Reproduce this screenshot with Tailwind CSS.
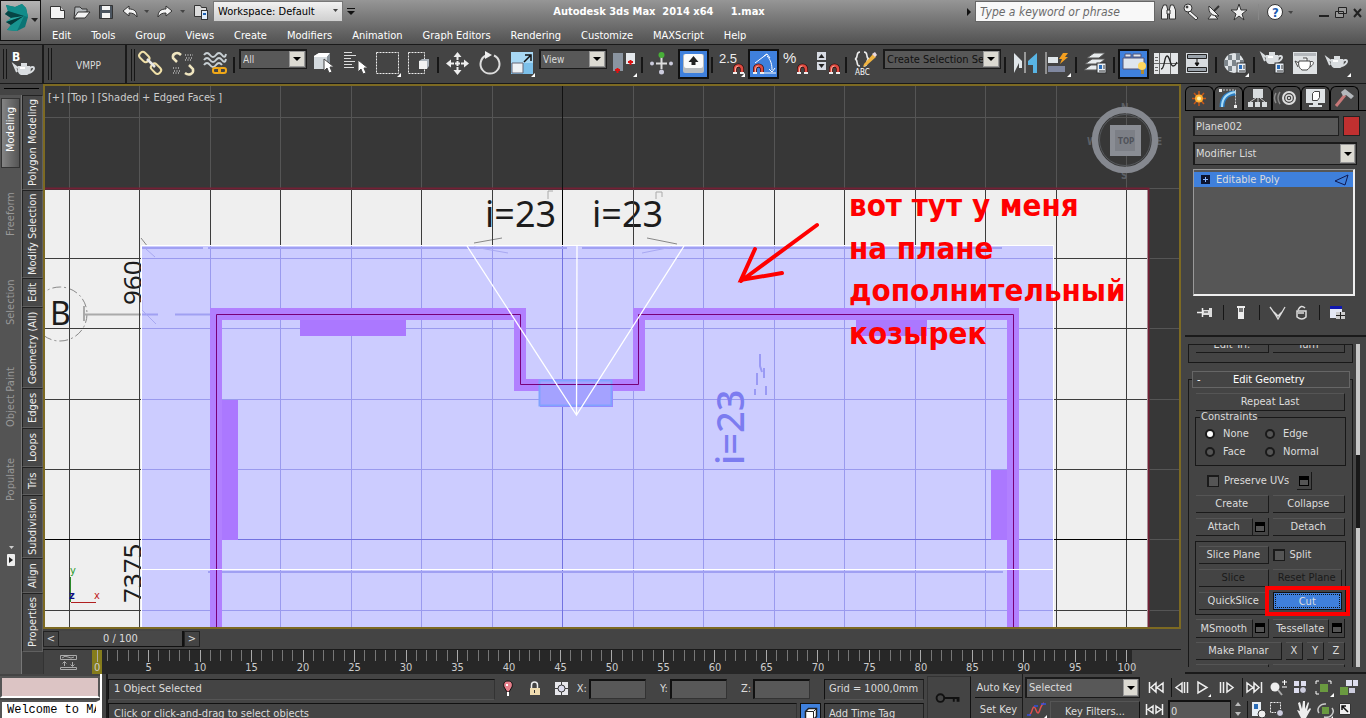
<!DOCTYPE html>
<html lang="en">
<head>
    <meta charset="UTF-8">
    <meta name="viewport" content="width=device-width, initial-scale=1.0">
    <title>Autodesk 3ds Max 2014 x64 - 1.max</title>
    <script src="https://cdn.jsdelivr.net/npm/@tailwindcss/browser@4"></script>
</head>
<body class="flex h-screen flex-col overflow-hidden bg-[#444] font-['DejaVu_Sans_Condensed','DejaVu_Sans',sans-serif] text-[11px] leading-[14px] text-[#dcdcdc]">

    <!-- Shared icon parts -->
    <svg class="absolute h-0 w-0" aria-hidden="true">
        <defs>
            <g id="magnet">
                <path d="M2 11V6a3.500 3.500 0 0 1 7 0v5" fill="none" stroke="#301010" stroke-width="4" />
                <path d="M2 11V6a3.500 3.500 0 0 1 7 0v5" fill="none" stroke="#e04a40" stroke-width="2.600" />
                <path d="M2.500 9V6a3 3 0 0 1 3-3" fill="none" stroke="#f8b0a0" />
                <path d="M0 9h4v2H0zM7 9h4v2H7z" fill="#eee" />
            </g>
            <path id="corner" d="M29 25v4h-4z" fill="#fff" />
            <g id="teapot">
                <path d="M5 6h12c2 4 0 8-3 9H8C5 14 4 10 5 6z" fill="#d9dde0" />
                <path d="M9 4h4v2H9zM5 8L1 5l3 7M17 8c5-3 6 2-1 5" fill="none" stroke="#d9dde0" stroke-width="2" />
                <path d="M7 8h5" stroke="#fff" stroke-width="2" />
            </g>
            <g id="cardlet">
                <rect x="0" y="0" width="9" height="10" fill="#e8eef4" stroke="#333" />
                <path d="M2 2h3v4H2z" fill="#2a6cb8" />
                <path d="M6 3h2M6 5h2M2 8h6" stroke="#333" />
            </g>
            <path id="cursor" d="M0 0v12l3-3 2 5 3-1-2-5h4z" fill="#fff" stroke="#444" stroke-width="1" />
        </defs>
    </svg>

    <!-- Title bar and menus -->
    <header class="flex h-11 shrink-0 bg-linear-to-b from-[#969696] to-[#525252]">
        <button aria-label="Application menu" class="relative h-[41px] w-[41px] shrink-0 border border-[#111] bg-linear-to-b from-[#b4b4b4] to-[#707070]">
            <svg class="h-full w-full" viewBox="0 0 39 39">
                <path d="M5 4l9 2 7-3 4 4 2 9-3 10-8 4-10-1 4-5-5-3 5-4-6-4 3-3z" fill="#0b7474" />
                <path d="M5 4l9 2 9 9-16-5zM21 3l4 4 2 9-4-1-9-9z" fill="#128c8a" />
                <path d="M7 10l16 5-13 2-6-4z" fill="#064545" />
                <path d="M10 17l13-2-18 6z" fill="#2aa8a2" />
                <path d="M5 21l18-6-13 9z" fill="#053c3c" />
                <path d="M10 24l13-9-7 15-10-1z" fill="#18938f" />
                <path d="M30 17h7l-3 4z" fill="#222" />
            </svg>
        </button>
        <div class="min-w-0 flex-1">
            <div class="flex h-[23px] items-center">
                <svg class="ml-2 h-[22px] w-40 shrink-0" viewBox="0 0 160 22">
                    <g stroke="#333" fill="#f4f4f4">
                        <path d="M1.500 5.500h10l4 4v8h-14z" />
                        <path d="M11.500 5.500v4h4" fill="#ccc" />
                        <path d="M26 6h5l2 2h5v3l-8 1-3 6h-2z" fill="#b9bdc0" />
                        <path d="M29 11h12l-5 6H25z" />
                        <path d="M50.500 4.500h13v13h-13z" fill="#4b5560" />
                        <path d="M53 5h8v4h-8zM53 12h8v5h-8z" stroke="none" />
                        <path d="M74 10l6-5v3c5 0 8 2 8 8-2-3-4-4-8-4v3z" />
                        <path d="M123 10l-6-5v3c-5 0-8 2-8 8 2-3 4-4 8-4v3z" />
                        <path d="M145.500 4.500h6l1 2h5v9h-12z" fill="#dcdcdc" />
                        <rect x="152.500" y="9.500" width="6" height="9" fill="#e0ecf8" />
                    </g>
                    <path d="M95 9h5l-2 3zM131 9h5l-2 3z" fill="#444" />
                    <path d="M154 12h3v2h-3z" fill="#1d62b4" />
                </svg>
                <div class="relative ml-1 shrink-0">
                    <select aria-label="Workspace" class="h-[21px] w-[130px] appearance-none border border-[#777] bg-linear-to-b from-[#f2f2f2] to-[#cfcfcf] pl-1 text-black">
                        <option>Workspace: Default</option>
                    </select>
                    <svg class="pointer-events-none absolute top-2 right-1 h-1 w-1.5" viewBox="0 0 6 4"><path d="M0 0h5L2.500 3z" fill="#444" /></svg>
                </div>
                <svg class="ml-1 h-2 w-2 shrink-0" viewBox="0 0 8 8"><path d="M0 0h8v1H0zM0 3h8L4 7z" fill="#111" /></svg>
                <h1 class="flex-1 pr-1 text-center font-bold whitespace-pre text-white">Autodesk 3ds Max  2014 x64     1.max</h1>
                <svg class="mr-1 h-2 w-1 shrink-0" viewBox="0 0 4 8"><path d="M0 0v8l4-4z" fill="#111" /></svg>
                <input type="text" aria-label="Search" placeholder="Type a keyword or phrase" class="h-[21px] w-[180px] shrink-0 border border-[#666] bg-[#f8f8f8] px-1 text-[12px] italic placeholder:text-[#6a6a6a]">
                <svg class="ml-1 h-[22px] w-[207px] shrink-0" viewBox="0 0 207 22">
                    <g fill="#f0f0f0" stroke="#333">
                        <path d="M2.500 18V9l2-5h3l1 4v10zM10.500 18V8l1-4h3l2 5v9z" />
                        <path d="M8 9h3v4H8z" />
                        <circle cx="29" cy="7" r="4" /><path d="M31 10l8 7-2 2-8-7z" />
                        <circle cx="28" cy="6" r="1" fill="#333" />
                        <path d="M50 5c-1 7 3 10 10 10zM52 14l-3 4h10l-3-3" />
                        <path d="M55 10l5-5" stroke-width="2" />
                        <path d="M80 3l2 6h6l-5 4 2 6-5-4-5 4 2-6-5-4h6z" />
                        <circle cx="116" cy="11" r="7.500" fill="#fff" />
                    </g>
                    <text x="113" y="16" class="fill-[#1f5db0] text-[13px] font-bold">?</text>
                    <path d="M99.500 3v16" stroke="#888" />
                    <path d="M129 10h5l-2 3z" fill="#444" />
                    <path d="M160 14h10v2h-10z" fill="#222" />
                    <path d="M179.500 6.500h8v6h-8zM176.500 10.500h8v6h-8z" fill="#999" stroke="#222" />
                    <path d="M195 8l7 8M202 8l-7 8" stroke="#222" stroke-width="2" />
                </svg>
            </div>
            <nav class="flex h-[21px] items-center gap-5 pt-1 pl-[11px] text-white">
                <a href="#">Edit</a>
                <a href="#">Tools</a>
                <a href="#">Group</a>
                <a href="#">Views</a>
                <a href="#">Create</a>
                <a href="#">Modifiers</a>
                <a href="#">Animation</a>
                <a href="#">Graph Editors</a>
                <a href="#">Rendering</a>
                <a href="#">Customize</a>
                <a href="#">MAXScript</a>
                <a href="#">Help</a>
            </nav>
        </div>
    </header>

    <!-- Main toolbar -->
    <div class="flex h-10 shrink-0 items-start overflow-hidden border-t border-b border-[#1a1a1a]">
        <div class="flex h-full w-11 shrink-0 border-r-2 border-[#1a1a1a] py-1 pl-[3px]">
            <span class="w-1 border-x border-[#161616]"></span>
            <svg class="h-8 w-8" viewBox="0 0 32 32">
                <text x="5" y="12" class="fill-white text-[12px] font-bold">B</text>
                <use href="#teapot" x="6" y="11" />
            </svg>
        </div>
        <div class="flex h-full w-[83px] shrink-0 items-center border-r-2 border-[#1a1a1a] pl-1">
            <span class="h-8 w-1 border-x border-[#161616]"></span>
            <button class="flex-1 pt-1 text-[10px]">VMPP</button>
        </div>
        <span class="mt-1 ml-1 h-8 w-1 shrink-0 border-x border-[#161616]"></span>
        <div class="flex items-start pt-1">
            <button aria-label="Select and link" class="w-8"><svg class="h-[30px] w-8" viewBox="-1 0 32 30">
                <g fill="none" stroke="#f0e0a8" stroke-width="2"><rect x="3" y="5" width="11" height="7" rx="3" transform="rotate(45 9 8)" /><rect x="15" y="16" width="11" height="7" rx="3" transform="rotate(45 20 19)" /><path d="M11 10l8 8" stroke="#e8e8e8" stroke-width="2.500" /></g>
            </svg></button>
            <button aria-label="Unlink selection" class="w-8"><svg class="h-[30px] w-8" viewBox="-1 0 32 30">
                <g fill="none" stroke="#f0e6c0" stroke-width="2.500"><path d="M13 6C9 2 4 5 5 9l4 4M17 24c4 3 9 1 8-4l-4-4" /></g>
                <g stroke="#999" stroke-width="2" stroke-dasharray="1 1.500"><path d="M17 6h8M18 9h7M17 11h7M5 19h7M6 22h7M5 24h6" /></g>
            </svg></button>
            <button aria-label="Bind to space warp" class="w-8"><svg class="h-[30px] w-8" viewBox="-1 0 32 30">
                <g fill="none" stroke="#c8d0d4" stroke-width="2"><path d="M4 6q3-4 6 0t6 0 6 0 4-1M4 11q3-4 6 0t6 0 6 0 4-1M4 16q3-4 6 0t6 0 6 0" /></g>
                <g fill="none" stroke="#f0a818" stroke-width="2"><rect x="13" y="19" width="7" height="5" rx="2" /><rect x="19" y="19" width="7" height="5" rx="2" /></g>
            </svg></button>
            <span class="mx-[2px] mt-2 h-4 w-[2px] bg-[#161616]"></span>
            <div class="relative ml-0.5">
                <select aria-label="Selection filter" class="h-5 w-[68px] appearance-none border-2 border-r border-b border-[#1a1a1a] bg-[#585858] pl-0.5 text-[10px]"><option>All</option></select>
                <span class="pointer-events-none absolute top-0.5 right-0.5 flex h-4 w-4 items-center justify-center border border-[#999] bg-[#dcdad2]"><svg class="h-1 w-2" viewBox="0 0 8 4"><path d="M0 0h8L4 4z" /></svg></span>
            </div>
            <button aria-label="Select object" class="w-8"><svg class="h-[30px] w-8" viewBox="-1 0 32 30">
                <path d="M6 7l5-3h11l-3 4v12H6z" fill="#d4dade" /><path d="M6 7l5-3h11l-3 4H6z" fill="#fff" /><path d="M19 8l3-4v11l-3 4z" fill="#8a949c" /><use href="#cursor" x="16" y="10" />
            </svg></button>
            <button aria-label="Select by name" class="w-8"><svg class="h-[30px] w-8" viewBox="-1 0 32 30">
                <path d="M4 3.500h8M4 6.500h12M4 9.500h7M4 12.500h11M4 15.500h8M4 18.500h10" stroke="#ddd" /><use href="#cursor" x="18" y="11" />
            </svg></button>
            <button aria-label="Rectangular selection region" class="w-8"><svg class="h-[30px] w-8" viewBox="-1 0 32 30">
                <rect x="4.500" y="3.500" width="22" height="21" fill="none" stroke="#eee" stroke-dasharray="2 1" /><use href="#corner" y="-1" />
            </svg></button>
            <button aria-label="Window crossing" class="w-8"><svg class="h-[30px] w-8" viewBox="-1 0 32 30">
                <rect x="4.500" y="3.500" width="16" height="21" fill="none" stroke="#eee" stroke-dasharray="2 1" /><path d="M15 12l3-2h7v7l-2 3h-8z" fill="#aab2ba" /><path d="M15 12h8v8h-8z" fill="#f2f2f2" />
            </svg></button>
            <span class="mx-[2px] mt-2 h-4 w-[2px] bg-[#161616]"></span>
            <button aria-label="Select and move" class="w-8"><svg class="h-[30px] w-8" viewBox="-1 0 32 30">
                <path d="M15.500 6v5M15.500 18v5M7 14.500h5M19 14.500h5M13 14.500h5M15.500 12v5" stroke="#eee" stroke-width="2" /><path d="M15.500 3l4 5h-8zM15.500 26l4-5h-8zM4 14.500l5-4v8zM27 14.500l-5-4v8z" fill="#eee" />
            </svg></button>
            <button aria-label="Select and rotate" class="w-8"><svg class="h-[30px] w-8" viewBox="-1 0 32 30">
                <path d="M12 6.500a9.500 9.500 0 1 0 8 0" fill="none" stroke="#ddd" stroke-width="2" /><path d="M11 2l7 4-7 4z" fill="#eee" />
            </svg></button>
            <button aria-label="Select and scale" class="w-8"><svg class="h-[30px] w-8" viewBox="-1 0 32 30">
                <path d="M5 3h22v22H5z" fill="#7cc0ea" /><path d="M5 3h22v11H5z" fill="#a8d8f4" /><path d="M6 14h11v10H6z" fill="#eef2f6" stroke="#667" /><path d="M18 13l6-6M19 6h6v6" fill="none" stroke="#111" stroke-width="1.500" /><use href="#corner" y="-1" />
            </svg></button>
            <div class="relative ml-0.5">
                <select aria-label="Reference coordinate system" class="h-5 w-[68px] appearance-none border-2 border-r border-b border-[#1a1a1a] bg-[#585858] pl-0.5 text-[10px]"><option>View</option></select>
                <span class="pointer-events-none absolute top-0.5 right-0.5 flex h-4 w-4 items-center justify-center border border-[#999] bg-[#dcdad2]"><svg class="h-1 w-2" viewBox="0 0 8 4"><path d="M0 0h8L4 4z" /></svg></span>
            </div>
            <button aria-label="Pivot point center" class="w-8"><svg class="h-[30px] w-8" viewBox="-1 0 32 30">
                <path d="M5 4h10v18H5z" fill="#8a94a0" /><path d="M18 4h9v11h-9z" fill="#e4e8ec" /><path d="M7 21h5M9.500 19v5M20 13h5M22.500 11v5" stroke="#e01010" stroke-width="2" /><use href="#corner" y="-1" />
            </svg></button>
            <span class="mx-[2px] mt-2 h-4 w-[2px] bg-[#161616]"></span>
            <button aria-label="Select and manipulate" class="w-8"><svg class="h-[30px] w-8" viewBox="-1 0 32 30">
                <path d="M15.500 8v12M10 14.500h11" stroke="#ddd" stroke-width="2" /><circle cx="15.500" cy="6" r="3" fill="#48b038" /><circle cx="6" cy="14.500" r="2" fill="#ccd" /><circle cx="25" cy="14.500" r="2" fill="#ccd" /><circle cx="15.500" cy="23" r="2.500" fill="#ccd" />
            </svg></button>
            <button aria-label="Keyboard shortcut override" class="w-8"><svg class="h-[30px] w-8" viewBox="-1 0 32 30">
                <rect x="1" y="1" width="29" height="28" fill="#3f80dc" stroke="#111" stroke-width="2" /><rect x="5" y="5" width="21" height="19" rx="2" fill="#b8bcc0" /><rect x="6" y="5" width="19" height="14" rx="2" fill="#fafafa" /><path d="M15.500 7l5 6h-3v3h-4v-3h-3z" fill="#222" />
            </svg></button>
            <span class="mx-[2px] mt-2 h-4 w-[2px] bg-[#161616]"></span>
            <button aria-label="Snaps toggle" class="w-8"><svg class="h-[30px] w-8" viewBox="-1 0 32 30">
                <text x="3" y="14" class="fill-[#eee] font-['Liberation_Sans'] text-[13px]">2.5</text><use href="#magnet" x="17" y="14" /><use href="#corner" y="-1" />
            </svg></button>
            <button aria-label="Angle snap toggle" class="w-8"><svg class="h-[30px] w-8" viewBox="-1 0 32 30">
                <rect x="1" y="1" width="29" height="28" fill="#3f80dc" stroke="#111" stroke-width="2" /><path d="M7 14L19 5M16 24h12M19 7c4 4 5 9 5 14M16 7l3-2 3 4M21 20l3 3 3-4" fill="none" stroke="#fff" /><use href="#magnet" x="5" y="14" />
            </svg></button>
            <button aria-label="Percent snap toggle" class="w-8"><svg class="h-[30px] w-8" viewBox="-1 0 32 30">
                <text x="3" y="14" class="fill-[#eee] font-['Liberation_Sans'] text-[15px]">%</text><use href="#magnet" x="17" y="14" />
            </svg></button>
            <button aria-label="Spinner snap toggle" class="w-8"><svg class="h-[30px] w-8" viewBox="-1 0 32 30">
                <path d="M5 3h9v8H5zM5 13h9v8H5z" fill="#d8dce4" /><path d="M6.500 9h6L9.500 5zM6.500 15h6l-3 4z" fill="#222" /><use href="#magnet" x="17" y="14" />
            </svg></button>
            <span class="mx-[2px] mt-2 h-4 w-[2px] bg-[#161616]"></span>
            <button aria-label="Edit named selection sets" class="w-8"><svg class="h-[30px] w-8" viewBox="-1 0 32 30">
                <path d="M10 3c-5 0-1 6-5 7 4 1 0 7 5 7M14 3c5 0 1 6 5 7-4 1 0 7-5 7" fill="none" stroke="#eee" stroke-width="1.500" /><path d="M14 15l9-10 3 3-9 8-4 2z" fill="#f0b440" /><path d="M22 5l3-2 2 3-2 2z" fill="#e8d8e0" /><text x="5" y="26" class="fill-white text-[8px]">ABC</text>
            </svg></button>
            <div class="relative ml-0.5">
                <select aria-label="Named selection sets" class="h-5 w-[118px] appearance-none border-2 border-r border-b border-[#1a1a1a] bg-[#585858] pr-4 pl-0.5 text-[#111]"><option>Create Selection Set</option></select>
                <span class="pointer-events-none absolute top-0.5 right-0.5 flex h-4 w-4 items-center justify-center border border-[#999] bg-[#dcdad2]"><svg class="h-1 w-2" viewBox="0 0 8 4"><path d="M0 0h8L4 4z" /></svg></span>
            </div>
            <span class="mx-[3px] mt-2 h-4 w-[2px] bg-[#161616]"></span>
            <button aria-label="Mirror" class="w-8"><svg class="h-[30px] w-8" viewBox="-1 0 32 30">
                <path d="M4 4l8 8v7H9v-5l-5 10z" fill="#e0e6ea" /><path d="M27 4l-9 8v4h5v8h4z" fill="#58b4e4" /><path d="M15 3v21" stroke="#eee" />
            </svg></button>
            <button aria-label="Align" class="w-8"><svg class="h-[30px] w-8" viewBox="-1 0 32 30">
                <path d="M4 3v22" stroke="#ddd" /><path d="M6 8h10v6H6z" fill="#e0e6ea" /><path d="M6 17h17v6H6z" fill="#8088a0" /><path d="M21 4h5l-3 4h3l-8 7 2-5h-3z" fill="#f4a020" /><use href="#corner" y="-1" />
            </svg></button>
            <span class="mx-[2px] mt-2 h-4 w-[2px] bg-[#161616]"></span>
            <button aria-label="Layer manager" class="w-8"><svg class="h-[30px] w-8" viewBox="-1 0 32 30">
                <g fill="#e8ecee" stroke="#555"><path d="M4 21l7-5h13l-6 5z" /><path d="M5 15l7-5h13l-6 5z" /><path d="M7 9l7-5h11l-6 5z" /></g><use href="#cardlet" x="17" y="14" />
            </svg></button>
            <span class="mx-[2px] mt-2 h-4 w-[2px] bg-[#161616]"></span>
            <button aria-label="Toggle ribbon" class="w-8"><svg class="h-[30px] w-8" viewBox="-1 0 32 30">
                <rect x="1" y="1" width="29" height="28" fill="#3f80dc" stroke="#111" stroke-width="2" /><path d="M5 9h21v11H5zM7 5h6v3H7zM15 5h8v3h-8z" fill="#dfe6ee" stroke="#557" /><circle cx="24" cy="17" r="4" fill="#ffd860" /><path d="M23 21h3v4h-3z" fill="#b08830" />
            </svg></button>
            <button aria-label="Curve editor" class="w-8"><svg class="h-[30px] w-8" viewBox="-1 0 32 30">
                <path d="M4 4h24v21H4z" fill="#e4e6e8" /><path d="M9.500 4v21M4 14.500h24M5 8.500h3M5 11.500h3M5 18.500h3M5 21.500h3M20.500 4v21" stroke="#666" /><path d="M11 20c4 0 3-13 6-13s3 10 6 10 2-1 4-4" fill="none" stroke="#222" stroke-width="1.300" />
            </svg></button>
            <button aria-label="Schematic view" class="w-8"><svg class="h-[30px] w-8" viewBox="-1 0 32 30">
                <path d="M4 4h22v20H4z" fill="#d8dce0" /><path d="M5.500 5.500h19v4h-19zM5.500 18.500h19v4h-19z" fill="#9aa2aa" stroke="#222" /><path d="M15 10v6M13 14h4l-2 3z" fill="#111" stroke="#111" />
            </svg></button>
            <span class="mx-[2px] mt-2 h-4 w-[2px] bg-[#161616]"></span>
            <button aria-label="Material editor" class="w-8"><svg class="h-[30px] w-8" viewBox="-1 0 32 30">
                <circle cx="14" cy="14" r="10" fill="#dfe3e6" /><path d="M8 6h4v5H8zM16 4h4v7h-4zM4 11h4v6H4zM12 11h4v6h-4zM20 11h4v6h-4zM8 17h4v5H8z" fill="#7d858b" /><use href="#cardlet" x="17" y="14" /><use href="#corner" y="-1" />
            </svg></button>
            <span class="mx-[2px] mt-2 h-4 w-[2px] bg-[#161616]"></span>
            <button aria-label="Render setup" class="w-8"><svg class="h-[30px] w-8" viewBox="-1 0 32 30">
                <use href="#teapot" x="3" y="0" /><use href="#cardlet" x="17" y="14" />
            </svg></button>
            <button aria-label="Rendered frame window" class="w-8"><svg class="h-[30px] w-8" viewBox="-1 0 32 30">
                <path d="M3 3h24v22H3z" fill="#dfe2e4" /><path d="M4 4h22v3H4z" fill="#b4b8bc" /><path d="M9 12h11c1 4 0 7-3 9h-5c-3-2-4-5-3-9zM13 9h4v3M9 14l-4-2 3 6M20 13c4-2 5 2 0 5" fill="#fff" stroke="#444" />
            </svg></button>
            <button aria-label="Render production" class="w-8"><svg class="h-[30px] w-8" viewBox="-1 0 32 30">
                <use href="#teapot" x="4" y="4" /><use href="#corner" y="-1" />
            </svg></button>
        </div>
    </div>

    <!-- Workspace -->
    <div class="flex min-h-0 flex-1">

        <!-- Modeling ribbon -->
        <aside class="flex w-[43px] shrink-0 flex-col">
            <div class="h-[11px] shrink-0 px-1 pt-1"><div class="border-b border-black"></div></div>
            <div class="flex min-h-0 flex-1">
                <div class="flex w-[22px] flex-col items-center border-r border-[#777] bg-[#545454] text-[#999]">
                    <button class="mt-[3px] h-[70px] w-[19px] rotate-180 border border-[#333] bg-linear-to-r from-[#555] to-[#858585] pb-2 text-right text-white [writing-mode:vertical-rl]">Modeling</button>
                    <button class="mt-[22px] h-[48px] w-[19px] rotate-180 [writing-mode:vertical-rl]">Freeform</button>
                    <button class="mt-10 h-[48px] w-[19px] rotate-180 whitespace-nowrap [writing-mode:vertical-rl]">Selection</button>
                    <button class="mt-9 h-[70px] w-[19px] rotate-180 whitespace-nowrap [writing-mode:vertical-rl]">Object Paint</button>
                    <button class="mt-6 h-[48px] w-[19px] rotate-180 whitespace-nowrap [writing-mode:vertical-rl]">Populate</button>
                    <svg class="mt-10 h-6 w-3" viewBox="0 0 12 24"><path d="M4 2h5L6.500 5z" fill="#ccc" /><rect x="2" y="10" width="8" height="12" rx="1" fill="#eee" /><path d="M4 13l4 3-4 3z" fill="#222" /></svg>
                </div>
                <div class="flex w-[21px] flex-col bg-[#3e3e3e] text-[#eee] *:shrink-0 *:rotate-180 *:border *:border-[#222] *:border-t-[#606060] *:border-l-[#606060] *:bg-[#484848] *:whitespace-nowrap *:[writing-mode:vertical-rl]">
                    <button class="h-[95px]">Polygon Modeling</button>
                    <button class="h-[88px]">Modify Selection</button>
                    <button class="h-[29px]">Edit</button>
                    <button class="h-[81px]">Geometry (All)</button>
                    <button class="h-[40px]">Edges</button>
                    <button class="h-[39px]">Loops</button>
                    <button class="h-[28px]">Tris</button>
                    <button class="h-[63px]">Subdivision</button>
                    <button class="h-[35px]">Align</button>
                    <button class="h-[59px]">Properties</button>
                </div>
            </div>
        </aside>

        <!-- Viewport with time slider -->
        <main class="flex min-w-0 flex-1 flex-col">
            <div class="relative min-h-0 flex-1 border-2 border-[#7d6a22] bg-[#373737]">
                <svg class="h-full w-full" id="viewport">
                    <g transform="translate(-45,-86)">
                        <g shape-rendering="crispEdges" stroke="#555" id="grid-dark"></g>
                        <path d="M45 188.500h1103.500V700" fill="none" stroke="#732035" stroke-width="2" />
                        <path d="M45 190h1102.500v500H45z" fill="#efefef" />
                        <g fill="none" stroke="#888">
                            <circle cx="60" cy="314" r="27" stroke-dasharray="9 3 2 3" />
                            <path d="M84 306v15M84 314.500h58" stroke-width="2" stroke="#aaa" />
                            <path d="M141 238l14 18M474 243l28-5M647 238l30 6" />
                        </g>
                        <g class="font-['Noto_Sans'] text-[26px]" fill="#1c1c1c">
                            <text transform="translate(142,305) rotate(-90)">960</text>
                            <text transform="translate(142,603) rotate(-90)">7375</text>
                            <text x="50" y="325" class="text-[32px]">B</text>
                            <text x="485" y="227" class="text-[36px]">i=23</text>
                            <text x="592" y="227" class="text-[36px]">i=23</text>
                        </g>
                        <path d="M548 199v-8h5M656 199v-7h6v5" fill="none" stroke="#aaa" />
                        <svg x="45" y="190" width="1102" height="510" viewBox="45 190 1102 510">
                            <g shape-rendering="crispEdges" stroke="#3c3c3c" id="grid-light"></g>
                        </svg>
                        <path d="M562.500 86v104" stroke="#111" />

                        <!-- Roof plane -->
                        <path d="M142 246h911v460H142z" fill="#ccccff" />
                        <svg x="142" y="246" width="911" height="460" viewBox="142 246 911 460">
                            <g shape-rendering="crispEdges" stroke="#9a9aee" id="grid-roof"></g>
                            <path d="M562.500 246v400M142 539.500h911" stroke="#7272e0" />
                        </svg>
                        <path d="M142 248h61M208 248h359M582 248h420M208 572h795" stroke="#a0a0f2" stroke-width="2" />
                        <path d="M142 314.500h16M175 314.500h35" stroke="#a0a0f2" stroke-width="2" />
                        <path d="M474 247l34 6M642 253l30-6M146 249l9 8M142 300v10l14 14" fill="none" stroke="#a8a8f2" />
                        <text transform="translate(744,465) rotate(-90)" class="font-['Noto_Sans'] text-[38px] font-medium" fill="#7c7cf0">i=23</text>
                        <path d="M760 354v12l2 6M757 373v12M764 368v10M755 389v6M766 386v9" fill="none" stroke="#9a9af4" stroke-width="2" />

                        <!-- Walls -->
                        <g fill="#ab78ff">
                            <path d="M300 318h106v18H300zM856 318h71v18h-71zM222 400h16v140h-16zM991 470h17v70h-17zM540 385h73v22h-73z" />
                        </g>
                        <path d="M216 700V314h304v71h119v-71h374v386" fill="none" stroke="#b180ff" stroke-width="12" />
                        <path d="M539.500 380.500h72v25h-72z" fill="#a4a2ff" stroke="#80a2ff" stroke-width="2" />
                        <path d="M216.500 700V314.500h304v70h118v-70h375V700" fill="none" stroke="#780078" />

                        <!-- Selected edges -->
                        <path d="M141.500 700V245.500h912V700M142 569.500h911" fill="none" stroke="#fff" />
                        <path d="M467 246l109.500 169L684 246M577 246l-.5 169" fill="none" stroke="#fff" stroke-width="1.300" />

                        <!-- Axis tripod -->
                        <path d="M70.500 577v25" stroke="#2a8a2a" />
                        <path d="M71 602.500h25" stroke="#b02020" />
                        <text x="70" y="574" fill="#2a9a2a">y</text>
                        <text x="94" y="599" fill="#c02020">x</text>
                        <text x="69" y="599" fill="#101080" class="font-bold">z</text>

                        <!-- Note -->
                        <g fill="none" stroke="#ff0000" stroke-width="4" stroke-linecap="round">
                            <path d="M817 225l-76 56M755 249l-14 31 41-7" />
                        </g>
                        <g class="text-[31px] font-bold" fill="#ff0000">
                            <text x="849" y="216">вот тут у меня</text>
                            <text x="849" y="259">на плане</text>
                            <text x="849" y="301">дополнительный</text>
                            <text x="849" y="344">козырек</text>
                        </g>

                        <!-- View cube -->
                        <g class="text-[10px] font-bold" fill="#5c6066">
                            <text x="1121" y="111">N</text>
                            <text x="1121" y="179">S</text>
                            <text x="1087" y="145">W</text>
                            <text x="1156" y="145">E</text>
                            <circle cx="1125" cy="140" r="30" fill="none" stroke="#85888f" stroke-width="6.500" />
                            <circle cx="1125" cy="140" r="25.500" fill="none" stroke="#55585c" />
                            <path d="M1110 125h31v31h-31z" fill="#8a8d94" />
                            <path d="M1115 130h20v21h-20z" fill="#7c7f86" />
                            <text x="1118" y="144" class="text-[8px]" fill="#50535a">TOP</text>
                        </g>
                    </g>
                </svg>
                <p class="absolute top-[5px] left-[3px] whitespace-pre text-[#ccc]">[+] [Top ] [Shaded + Edged Faces ]</p>
            </div>

            <div class="flex h-[21px] shrink-0 items-center border-b border-[#1a1a1a]">
                <button class="h-4 w-4 border border-[#222] leading-3">&lt;</button>
                <button class="h-4 w-[125px] border-r-2 border-b border-[#111] bg-[#484848]">0 / 100</button>
                <button class="h-4 w-4 border border-[#222] leading-3">&gt;</button>
            </div>
            <div class="flex h-6 shrink-0">
                <button aria-label="Open mini curve editor" class="flex w-[49px] justify-center border-l border-[#333] pt-1">
                    <svg class="h-[17px] w-[17px]" viewBox="0 0 17 17"><path d="M.5 1.500h16v4H.5zM.5 13.500h16v2H.5zM2 4q3-3 6-1t6 0M4.500 12V8M2.500 9.500l2-2 2 2M12.500 8v4M10.500 10.500l2 2 2-2" fill="none" stroke="#aaa" /></svg>
                </button>
                <div id="trackbar" class="flex min-w-0 flex-1 bg-[#272727]"></div>
                <div class="w-[49px]"></div>
            </div>
        </main>

        <!-- Command panel -->
        <aside class="flex w-[185px] shrink-0 flex-col overflow-hidden pl-1">
            <div class="mt-0.5 flex h-[25px] shrink-0 border-b border-black *:h-6 *:w-[29px] *:rounded-t-md *:border *:border-b-0 *:border-black">
                <button aria-label="Create"><svg class="h-full w-full" viewBox="0 0 27 23"><path d="M13 4v15M6 11.500h14M8 6l10 11M18 6L8 17" stroke="#c85818" stroke-width="1.500" /><circle cx="13" cy="11.500" r="4" fill="#ffb030" /><circle cx="13" cy="11.500" r="2" fill="#fff4b0" /></svg></button>
                <button aria-label="Modify" class="bg-[#4c4c4c]"><svg class="h-full w-full" viewBox="0 0 27 23"><path d="M7 20C7 11 12 6 21 6" fill="none" stroke="#2c7cc0" stroke-width="5" /><path d="M7 20C7 10 12 6 21 5" fill="none" stroke="#a8dcf8" stroke-width="2" /><path d="M5 3h15.500v16" fill="none" stroke="#ccc" stroke-dasharray="2 1" /><path d="M4 2h3v3H4zM19 18h3v3h-3z" fill="#eee" /></svg></button>
                <button aria-label="Hierarchy"><svg class="h-full w-full" viewBox="0 0 27 23"><path d="M9 2h10v9H9zM4 15h5v5H4zM11 15h5v5h-5zM18 15h5v5h-5z" fill="#d8dcde" /><path d="M14 11v4M6 15l6-4M21 15l-5-4" stroke="#ccc" /></svg></button>
                <button aria-label="Motion"><svg class="h-full w-full" viewBox="0 0 27 23"><g fill="none" stroke="#ddd" stroke-width="2"><circle cx="16" cy="11" r="6" /><circle cx="16" cy="11" r="3" stroke-width="1.500" /><path d="M7 5q-4 6 0 12M3 6q-3 5 0 10" stroke="#888" stroke-width="1.500" /></g><circle cx="16" cy="11" r="1" fill="#fff" /></svg></button>
                <button aria-label="Display"><svg class="h-full w-full" viewBox="0 0 27 23"><path d="M4 2h19v14H4zM11 16h5v2h4v2H7v-2h4z" fill="#dfe3e6" /><path d="M10.500 6.500l2-2h5v6l-2 3h-5z" fill="#fff" stroke="#444" /></svg></button>
                <button aria-label="Utilities"><svg class="h-full w-full" viewBox="0 0 27 23"><path d="M5 19L14 8" stroke="#c87878" stroke-width="3" /><path d="M10 5l4-3 9 7-3 3-5-4-3 1z" fill="#b4b8bc" /></svg></button>
            </div>

            <div class="flex flex-col pt-[5px] pr-1.5 pl-2">
                <div class="flex gap-1">
                    <input type="text" aria-label="Object name" value="Plane002" class="h-5 min-w-0 flex-1 border-2 border-r border-b border-[#1f1f1f] bg-[#585858] pl-px">
                    <button aria-label="Object color" class="h-5 w-[17px] border border-[#222] bg-[#c03030]"></button>
                </div>
                <div class="relative mt-1.5 mr-[3px]">
                    <select aria-label="Modifier list" class="h-[23px] w-full appearance-none border-2 border-r border-b border-[#1a1a1a] bg-[#585858] pl-px"><option>Modifier List</option></select>
                    <span class="pointer-events-none absolute top-0.5 right-0.5 flex h-[19px] w-[15px] items-center justify-center border border-[#999] bg-[#dcdad2]"><svg class="h-1 w-2" viewBox="0 0 8 4"><path d="M0 0h8L4 4z" fill="#000" /></svg></span>
                </div>
                <div class="mt-1 mr-[5px] h-[127px] border-2 border-t border-l border-[#eee] border-t-[#999] border-l-[#999] bg-[#565656]">
                    <button class="mt-0.5 flex h-[15px] w-full items-center bg-[#3f80dc] pl-[7px] text-left">
                        <svg class="mr-1.5 h-[9px] w-[9px]" viewBox="0 0 9 9"><path d="M0 0h9v9H0z" fill="#0c1430" /><path d="M2 4.500h5M4.500 2v5" stroke="#8cb8ff" /></svg>
                        <span class="flex-1">Editable Poly</span>
                        <svg class="mr-1 h-3 w-[15px]" viewBox="0 0 15 12"><path d="M1 7l13-6-3 10z" fill="none" stroke="#101850" /></svg>
                    </button>
                </div>
                <svg class="mt-2 h-[17px] w-[152px]" viewBox="0 0 152 17">
                    <path d="M4 8.500h5M9.500 4v9" fill="none" stroke="#eee" stroke-width="1.500" /><path d="M10 6h6v5h-6zM16 4h3v9h-3z" fill="#ddd" /><path d="M11 8h4" stroke="#333" />
                    <path d="M30.500 1v15M66.500 1v15M126.500 1v15" stroke="#161616" />
                    <path d="M44 2h8v2h-1v11h-6V4h-1z" fill="#eee" /><path d="M46 4h4v4h-4z" fill="#777" />
                    <path d="M77 3l5 7 3 5 3-5 4-7M81 8l4 4 4-4" fill="none" stroke="#ddd" stroke-width="1.300" />
                    <path d="M104 7h9v6q-4 4-9 0zM105 6q3-6 7-2M105 9h6" fill="none" stroke="#ddd" stroke-width="1.500" />
                    <path d="M137 2h12v12h-12z" fill="#e4e8f4" /><path d="M137 2h12v3h-12z" fill="#1018b0" /><path d="M143 8h9v7h-9z" fill="#ccc" /><path d="M143 11.500h9M147.500 8v7" stroke="#222" />
                </svg>
            </div>

            <div class="mt-3.5 h-[9px] shrink-0 border-t-2 border-[#1a1a1a]"></div>

            <div class="flex min-h-0 flex-1 overflow-hidden pl-[3px]">
                <div class="flex w-[165px] shrink-0 flex-col overflow-hidden border-t border-[#1a1a1a]">
                    <div class="h-[18px] shrink-0 overflow-hidden border border-t-0 border-[#181818] px-[7px]">
                        <div class="-mt-2 flex gap-1 *:h-4 *:flex-1 *:border-r *:border-b *:border-[#1a1a1a]">
                            <button>Edit Tri.</button>
                            <button>Turn</button>
                        </div>
                    </div>

                    <section class="mt-4 border border-[#181818] px-[7px] pb-2">
                        <button class="relative -mx-1 -mt-[9px] flex h-[17px] w-[158px] items-center border border-[#666] bg-[#444] px-1 text-white">
                            <span>-</span><span class="flex-1 pr-2 text-center">Edit Geometry</span>
                        </button>
                        <button class="mt-[5px] h-[18px] w-full border-t border-r border-b border-[#1a1a1a] border-t-[#555]">Repeat Last</button>

                        <fieldset class="-mx-px mt-0 h-[55px] border border-[#181818] px-2">
                            <legend class="-mx-1 h-3 px-px leading-3">Constraints</legend>
                            <div class="grid grid-cols-[60px_1fr] gap-y-1 pt-1 pl-px">
                                <label class="flex items-center gap-2"><input type="radio" name="constraint" checked class="h-[10px] w-[10px] appearance-none rounded-full border-2 border-[#1a1a1a] bg-[#555] checked:bg-white"> None</label>
                                <label class="flex items-center gap-2"><input type="radio" name="constraint" class="h-[10px] w-[10px] appearance-none rounded-full border-2 border-[#1a1a1a] bg-[#555] checked:bg-white"> Edge</label>
                                <label class="flex items-center gap-2"><input type="radio" name="constraint" class="h-[10px] w-[10px] appearance-none rounded-full border-2 border-[#1a1a1a] bg-[#555] checked:bg-white"> Face</label>
                                <label class="flex items-center gap-2"><input type="radio" name="constraint" class="h-[10px] w-[10px] appearance-none rounded-full border-2 border-[#1a1a1a] bg-[#555] checked:bg-white"> Normal</label>
                            </div>
                        </fieldset>

                        <div class="mt-1.5 flex h-[18px] items-center pl-[11px]">
                            <label class="flex items-center gap-[5px]"><input type="checkbox" class="h-3 w-3 appearance-none border-2 border-r border-b border-[#1a1a1a] bg-[#555]"> Preserve UVs</label>
                            <button aria-label="Preserve UVs settings" class="ml-2 flex h-[18px] w-[15px] items-center justify-center border-r border-b border-[#181818]"><span class="h-[10px] w-[10px] border border-t-4 border-black bg-[#555]"></span></button>
                        </div>

                        <div class="mt-[5px] grid grid-cols-2 gap-x-1 gap-y-1 *:h-[18px]">
                            <button class="border-t border-r border-b border-[#1a1a1a] border-t-[#555]">Create</button>
                            <button class="border-t border-r border-b border-[#1a1a1a] border-t-[#555]">Collapse</button>
                            <div class="mt-px flex">
                                <button class="flex-1 border-t border-r border-b border-[#1a1a1a] border-t-[#555]">Attach</button>
                                <button aria-label="Attach list" class="flex w-4 items-center justify-center border-r border-b border-[#181818]"><span class="h-[10px] w-[10px] border border-t-4 border-black bg-[#555]"></span></button>
                            </div>
                            <button class="mt-px border-t border-r border-b border-[#1a1a1a] border-t-[#555]">Detach</button>
                        </div>

                        <div class="-mx-px mt-[5px] grid grid-cols-2 gap-x-1 gap-y-[5px] border border-[#181818] px-[3px] pt-1 pb-1 *:h-[18px]">
                            <button class="border-t border-r border-b border-[#1a1a1a] border-t-[#555]">Slice Plane</button>
                            <label class="flex items-center gap-[5px]"><input type="checkbox" class="h-3 w-3 appearance-none border-2 border-r border-b border-[#1a1a1a] bg-[#555]"> Split</label>
                            <button class="border-t border-r border-b border-[#1a1a1a] border-t-[#555] text-[#1a1a1a]">Slice</button>
                            <button class="border-t border-r border-b border-[#1a1a1a] border-t-[#555] text-[#1a1a1a]">Reset Plane</button>
                            <button class="border-t border-r border-b border-[#1a1a1a] border-t-[#555]">QuickSlice</button>
                            <div class="relative">
                                <button class="h-[18px] w-full border border-[#111] bg-[#3f80dc] p-px"><span class="block h-full border border-dotted border-[#111] leading-[14px]">Cut</span></button>
                                <span class="pointer-events-none absolute -inset-x-2 -inset-y-1.5 border-4 border-[#ff0000]"></span>
                            </div>
                        </div>

                        <div class="mt-1 grid grid-cols-2 gap-x-1 *:h-[19px]">
                            <div class="flex">
                                <button class="flex-1 border-t border-r border-b border-[#1a1a1a] border-t-[#555]">MSmooth</button>
                                <button aria-label="MSmooth settings" class="flex w-4 items-center justify-center border-r border-b border-[#181818]"><span class="h-[10px] w-[10px] border border-t-4 border-black bg-[#555]"></span></button>
                            </div>
                            <div class="flex">
                                <button class="flex-1 border-t border-r border-b border-[#1a1a1a] border-t-[#555]">Tessellate</button>
                                <button aria-label="Tessellate settings" class="flex w-4 items-center justify-center border-r border-b border-[#181818]"><span class="h-[10px] w-[10px] border border-t-4 border-black bg-[#555]"></span></button>
                            </div>
                        </div>
                        <div class="mt-1 flex h-[18px] gap-1 *:border-t *:border-r *:border-b *:border-[#1a1a1a] *:border-t-[#555]">
                            <button class="flex-1">Make Planar</button>
                            <button class="w-[17px]">X</button>
                            <button class="w-[17px]">Y</button>
                            <button class="w-[17px]">Z</button>
                        </div>
                        <div class="mt-1 flex h-[18px] gap-1 *:flex-1 *:border-t *:border-r *:border-[#1a1a1a] *:border-t-[#555]">
                            <button aria-label="View Align"></button>
                            <button aria-label="Grid Align"></button>
                        </div>
                    </section>
                </div>
                <div class="ml-[3px] flex w-1 flex-col bg-[#c8c8c8]">
                    <div class="mt-[111px] h-[73px] bg-[#181818]"></div>
                </div>
            </div>
            <div class="h-[7px] shrink-0 border-b-2 border-[#1a1a1a]"></div>
        </aside>
    </div>

    <!-- Status bar -->
    <footer class="flex h-[44px] shrink-0 overflow-hidden">
        <div class="w-[102px] shrink-0 border-r-2 border-white pt-0.5">
            <div class="h-[22px] border-2 border-[#555] border-b-white bg-[#dcc4c4]"></div>
            <input type="text" aria-label="MAXScript listener" value="Welcome to MAXScript." class="mt-0.5 h-5 w-full border-2 border-r-4 border-[#555] border-r-white bg-white pl-[5px] font-['Liberation_Mono',monospace] text-[12px] text-black">
        </div>
        <div class="ml-1 min-w-0 flex-1 border-l-2 border-[#1a1a1a] pt-1">
            <div class="flex h-[22px] items-center">
                <p class="flex h-[21px] flex-1 items-center border border-t-[#111] border-r-[#333] border-b-[#555] border-l-[#111] pl-[5px]">1 Object Selected</p>
                <svg class="mr-1 ml-1.5 h-[18px] w-[72px] shrink-0" viewBox="0 0 72 18">
                    <path d="M7 1c4 0 5 3 4 6l-3 5H6L3 7C2 4 3 1 7 1z" fill="#e8808c" stroke="#111" /><path d="M6 12h2v4H6z" fill="#fff" /><path d="M5 4h2v2H5z" fill="#fff" />
                    <path d="M30.500 8V5a3 3 0 0 1 6 0v3" fill="none" stroke="#eee" stroke-width="1.500" /><path d="M29 8h10v7H29z" fill="#f0dcb0" /><path d="M33 10h1v3h-1z" fill="#333" />
                    <path d="M54 2h13v13H54z" fill="#e8e8ec" /><path d="M60.500 2v13M54 8.500h13" stroke="#444" /><circle cx="60.500" cy="8.500" r="3.500" fill="#dde" stroke="#333" />
                </svg>
                <label class="flex items-center gap-0.5">X: <input type="text" class="h-5 w-[57px] border-2 border-r border-b border-[#111] border-r-[#333] border-b-[#333] bg-[#585858]"></label>
                <label class="ml-3.5 flex items-center gap-0.5">Y: <input type="text" class="h-5 w-[57px] border-2 border-r border-b border-[#111] border-r-[#333] border-b-[#333] bg-[#585858]"></label>
                <label class="ml-3.5 flex items-center gap-0.5">Z: <input type="text" class="h-5 w-[57px] border-2 border-r border-b border-[#111] border-r-[#333] border-b-[#333] bg-[#585858]"></label>
                <p class="ml-3.5 flex h-[21px] w-[100px] items-center border border-t-[#111] border-r-[#222] border-b-[#555] border-l-[#111] pl-1">Grid = 1000,0mm</p>
            </div>
            <div class="mt-[3px] flex h-[22px] items-start">
                <p class="flex h-[21px] flex-1 items-center border border-t-[#111] border-r-[#333] border-b-[#555] border-l-[#111] pl-[5px]">Click or click-and-drag to select objects</p>
                <button aria-label="Adaptive degradation" class="mx-[3px] h-[21px] w-[21px] border border-[#111] bg-[#3f80dc]"><svg class="h-full w-full" viewBox="0 0 19 19"><path d="M4.500 7.500l3-3h8v8l-3 3h-8z" fill="#fff" stroke="#222" stroke-width="1.500" /><path d="M4.500 7.500h8v8M12.500 7.500l3-3" fill="none" stroke="#222" /></svg></button>
                <p class="flex h-[21px] w-[100px] items-center border border-t-[#111] border-r-[#222] border-b-[#555] border-l-[#111] pl-1">Add Time Tag</p>
            </div>
        </div>
        <button aria-label="Set keys" class="mt-0.5 ml-[3px] h-[46px] w-11 shrink-0 border border-t-[#333] border-r-[#111] border-b-[#111] border-l-[#333]"><svg class="h-full w-full" viewBox="0 0 44 46"><circle cx="13" cy="22" r="4" fill="none" stroke="#111" stroke-width="2" /><path d="M17 21h16v5h-3v-3h-2v3h-2v-3h-9z" fill="#111" /></svg></button>
        <div class="ml-1 w-12 shrink-0 border-r border-[#1a1a1a] pt-1">
            <button class="block h-5 w-full border-b border-[#111] whitespace-nowrap">Auto Key</button>
            <button class="mt-0.5 block h-5 w-full whitespace-nowrap">Set Key</button>
        </div>
        <div class="ml-0.5 w-[115px] shrink-0 pt-[3px]">
            <div class="relative">
                <select aria-label="Key set" class="h-[21px] w-full appearance-none border-2 border-r border-b border-[#1a1a1a] bg-[#585858] pl-0.5"><option>Selected</option></select>
                <span class="pointer-events-none absolute top-0.5 right-0.5 flex h-[17px] w-[15px] items-center justify-center border border-[#999] bg-[#dcdad2]"><svg class="h-1 w-2" viewBox="0 0 8 4"><path d="M0 0h8L4 4z" fill="#000" /></svg></span>
            </div>
            <div class="mt-[3px] flex">
                <svg class="h-5 w-[25px]" viewBox="0 0 25 20"><path d="M4 14c3 0 3-8 5-8s2 6 4 6 2-8 6-10" fill="none" stroke="#e05050" stroke-width="1.500" /><path d="M2 14h4M9 5h4M16 3h5" stroke="#3050e0" stroke-width="1.500" /><path d="M22 14v4h-4z" fill="#fff" /></svg>
                <button class="h-5 flex-1 border border-b-0 border-[#555] border-r-[#111] whitespace-nowrap">Key Filters...</button>
            </div>
        </div>
        <div class="ml-1 w-[222px] shrink-0 pt-1">
            <svg class="h-5 w-[219px]" viewBox="0 0 219 20">
                <g fill="none" stroke="#eee" stroke-width="1.500">
                    <path d="M5.500 4v11M12 5L7 9.500l5 4.500zM19 5l-6 4.500 6 4.500z" />
                    <path d="M38 5l-6 4.500 6 4.500zM40.500 4v11M43.500 4v11" />
                    <path d="M54 4v11l9-5.500z" />
                    <path d="M76.500 4v11M79.500 4v11M83 5v9l6-4.500z" />
                    <path d="M103 5v9l6-4.500zM110 5v9l5-4.500zM117.500 4v11" />
                </g>
                <path d="M27.500 0v19M98.500 0v19" stroke="#161616" />
                <path d="M67 16v3h-3z" fill="#fff" />
                <circle cx="131" cy="9" r="4.500" fill="#eee" /><path d="M134 12l4 5" stroke="#aaa" stroke-width="2" /><path d="M138 4h5M140.500 2v5M138 9h5" stroke="#fff" />
                <path d="M150 3h5v5h-5zM157 3h5v5h-5zM150 10h5v5h-5z" fill="#dde" /><circle cx="159" cy="12" r="3.500" fill="#ccd" stroke="#333" />
                <path d="M176 6h8v8h-8z" fill="#6a9a40" /><path d="M172 6V3h3M184 3h3v3M172 13v3h3" fill="none" stroke="#fff" /><path d="M190 15v4h-4z" fill="#fff" />
                <path d="M202 2h6v6h-6zM209 2h5v6h-5z" fill="#dde" /><path d="M196 9h8v8h-8z" fill="#6a9a40" /><path d="M205 10h6v5h-6z" fill="#ccd" />
            </svg>
            <div class="mt-0.5 flex items-start gap-1">
                <svg class="h-5 w-5" viewBox="0 0 20 20"><path d="M2.500 4v11M9 6L4 9.500l5 3.500zM12 6l5 3.500-5 3.500zM18.500 4v11" fill="none" stroke="#eee" stroke-width="1.500" /></svg>
                <input type="text" aria-label="Current frame" value="0" class="h-[21px] w-[63px] border-2 border-r border-b border-[#111] bg-[#585858] pl-px">
                <svg class="h-5 w-[124px]" viewBox="0 0 124 20">
                    <path d="M0 6h6L3 2zM0 12h6l-3 4z" fill="#bbb" />
                    <path d="M12.500 1v19" stroke="#161616" />
                    <path d="M17 2h9v14h-9z" fill="#e8eef4" /><path d="M19 4h4v5h-4z" fill="#2a6cb8" /><circle cx="27" cy="14" r="4" fill="#eee" stroke="#333" />
                    <path d="M35.500 2.500h10v10h-10z" fill="none" stroke="#eee" stroke-dasharray="2 1" /><circle cx="45" cy="13" r="3.500" fill="#ccd" stroke="#333" />
                    <path d="M62 10l3 1-2-8 2-1 2 7 1-8h2v8l3-7 1 1-2 8 3-3 1 1-5 9h-5z" fill="#eee" />
                    <path d="M84 13a7 6 0 0 1 7-9M97 8a7 6 0 0 1-8 9" fill="none" stroke="#ccc" stroke-width="1.500" /><path d="M87 7h7v7h-7z" fill="#6a9a40" /><path d="M98 16v4h-4z" fill="#fff" />
                    <path d="M104.500 3.500h11v11h-11z" fill="#eee" stroke="#333" /><path d="M107 6l6 6M107 10V6h4" fill="none" stroke="#111" stroke-width="1.500" />
                </svg>
            </div>
        </div>
    </footer>

    <script>
        // Construction grid, one path per surface it shows through
        const xs = [];
        for (let i = -1; i < 24; i++) xs.push(Math.round(139 + (i * 423) / 6) + 0.5);
        const ys = [];
        for (let i = -6; i < 4; i++) ys.push(Math.ceil(539 + (i * 422) / 6) + 0.5);
        const lines = xs.map(x => `M${x} 86V1000`).join('') + ys.map(y => `M45 ${y}H1800`).join('');
        ['grid-dark', 'grid-light', 'grid-roof'].forEach(id => {
            document.getElementById(id).innerHTML = `<path d="${lines}" />`;
        });
        document.getElementById('grid-light').innerHTML += '<path d="M562.5 86V1000M45 539.5H1800" stroke="#000" />';

        // Frames 0 to 100 on the track bar
        const trackbar = document.getElementById('trackbar');
        for (let frame = 0; frame <= 100; frame++) {
            const cell = document.createElement('div');
            const major = frame % 5 === 0;
            cell.className = frame === 0
                ? 'flex w-0 flex-1 flex-col items-center bg-[#857c1c]'
                : 'flex w-0 flex-1 flex-col items-center';
            cell.innerHTML = major
                ? `<span class="h-3 w-px shrink-0 bg-[#aaa]"></span><span class="leading-3 text-[#ccc]">${frame}</span>`
                : '<span class="h-[11px] w-px shrink-0 bg-[#777]"></span>';
            trackbar.append(cell);
        }
    </script>
</body>
</html>
